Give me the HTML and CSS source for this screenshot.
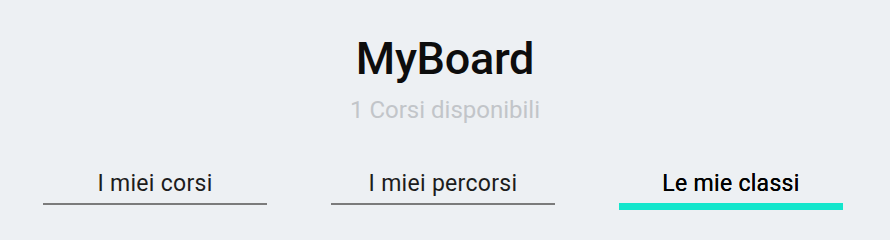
FILE: index.html
```html
<!DOCTYPE html>
<html lang="it">
<head>
<meta charset="utf-8">
<title>MyBoard</title>
<link rel="stylesheet" href="styles.css">
</head>
<body>
<div class="page">
  <header class="header">
    <h1 class="title">MyBoard</h1>
    <p class="subtitle">1 Corsi disponibili</p>
  </header>
  <nav class="tabs">
    <a class="tab">I miei corsi</a>
    <a class="tab">I miei percorsi</a>
    <a class="tab tab-active">Le mie classi</a>
  </nav>
</div>
</body>
</html>
```
FILE: styles.css
```css
html, body {
  margin: 0;
  padding: 0;
}
body {
  background: #edf0f3;
  font-family: Roboto, "Liberation Sans", sans-serif;
  width: 890px;
  height: 237px;
  overflow: hidden;
}
.page {
  padding-top: 32px;
}
.header {
  text-align: center;
}
.title {
  margin: 0;
  font-size: 45px;
  line-height: 54px;
  font-weight: 500;
  color: #0d0d0d;
  letter-spacing: -0.3px;
}
.subtitle {
  margin: 10px 0 0;
  font-size: 24px;
  line-height: 28px;
  color: #c2c5c9;
}
.tabs {
  display: flex;
  gap: 64px;
  margin-top: 47px;
  padding-left: 43px;
  align-items: flex-start;
}
.tab {
  width: 224px;
  box-sizing: border-box;
  text-align: center;
  font-size: 23px;
  line-height: 26px;
  letter-spacing: 0.3px;
  color: #1c1c1c;
  padding-bottom: 6px;
  border-bottom: 2px solid #7b7b7b;
}
.tab-active {
  color: #000;
  border-bottom: 7px solid #14e6cc;
  text-shadow: 0 0 0.4px #000;
}
```
